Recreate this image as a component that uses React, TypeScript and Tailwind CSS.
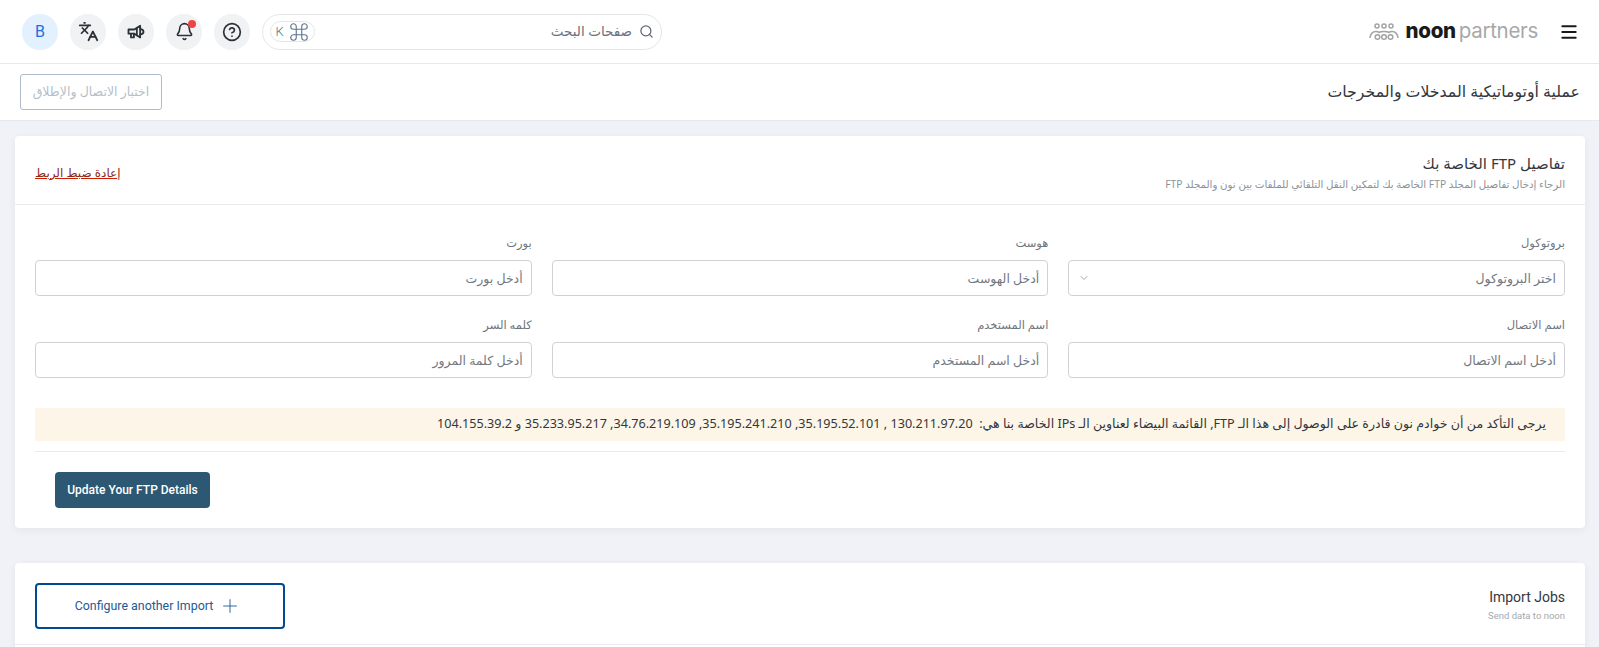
import { Bell, ChevronDown, CircleHelp, Command, Languages, Menu, Plus, Search } from "lucide-react";

const ARABIC_FONT = "font-['Noto_Sans','DejaVu_Sans',sans-serif]";

const fields = [
  { label: "بروتوكول", placeholder: "اختر البروتوكول", select: true },
  { label: "هوست", placeholder: "أدخل الهوست" },
  { label: "بورت", placeholder: "أدخل بورت" },
  { label: "اسم الاتصال", placeholder: "أدخل اسم الاتصال" },
  { label: "اسم المستخدم", placeholder: "أدخل اسم المستخدم" },
  { label: "كلمه السر", placeholder: "أدخل كلمة المرور" },
];

const Logo = () => (
  <div dir="ltr" className="flex items-center gap-[7px]">
    <svg width="30" height="20" viewBox="0 0 30 20" fill="none" stroke="#a3a3a3" strokeWidth="1.5">
      <circle cx="8" cy="4" r="2" />
      <circle cx="15" cy="4" r="2" />
      <circle cx="22" cy="4" r="2" />
      <circle cx="8.500" cy="15" r="2.300" />
      <circle cx="15" cy="15" r="2.300" />
      <circle cx="21.500" cy="15" r="2.300" />
      <path d="M1 16c.5-4 3-6.500 6-6.500 1.500 0 2.500.4 3 1 1-1 2.500-1 5-1s4 0 5 1c.5-.6 1.500-1 3-1 3 0 5.500 2.500 6 6.500" />
    </svg>
    <div className="flex items-baseline font-['Inter',sans-serif] text-[20.5px] leading-none tracking-[-0.3px]">
      <span className="font-extrabold text-[#1a1a1a]">noon</span>
      <span className="ml-[3px] font-normal text-[#a8a8a8]">partners</span>
    </div>
  </div>
);

const MegaphoneIcon = () => (
  <svg width="20" height="20" viewBox="0 0 24 24" fill="none" stroke="currentColor" strokeWidth="2.2" strokeLinejoin="round" strokeLinecap="round">
    <path d="M3 9h7l7-4.500v14L10 14H3z" />
    <path d="M6 14v4.500h3.500V14" />
    <path d="M17 8.500c2.500.2 4 1.600 4 3.200s-1.500 3-4 3.200" />
    <path d="M13 7v9" />
  </svg>
);

const IconButton = ({ children, dot }: { children: React.ReactNode; dot?: boolean }) => (
  <button className="relative flex h-9 w-9 items-center justify-center rounded-full bg-[#f1f2f4] text-[#2c3138]">
    {children}
    {dot && <span className="absolute right-[6px] top-[6px] h-2 w-2 rounded-full bg-[#ef4444]" />}
  </button>
);

const Header = () => (
  <header className="flex h-16 shrink-0 items-center justify-between border-b border-[#e6e8ec] bg-white pl-[22px] pr-[20px]">
    <div className="flex items-center gap-[21px]">
      <Menu size={20} strokeWidth={2.4} className="text-[#1a1a1a]" />
      <Logo />
    </div>
    <div dir="ltr" className="flex items-center gap-3">
      <div className="flex h-9 w-9 items-center justify-center rounded-full bg-[#e3f0fd] font-['Roboto',sans-serif] text-base text-[#1f6fe0]">
        B
      </div>
      <IconButton>
        <Languages size={21} strokeWidth={2} />
      </IconButton>
      <IconButton>
        <MegaphoneIcon />
      </IconButton>
      <IconButton dot>
        <Bell size={19} strokeWidth={2} />
      </IconButton>
      <IconButton>
        <CircleHelp size={20} strokeWidth={2} />
      </IconButton>
      <div className="flex h-9 w-[400px] items-center justify-between rounded-full border border-[#e4e6ea] bg-white pl-[7px] pr-[7px]">
        <div className="flex h-[21px] w-[45px] items-center justify-center gap-[4px] rounded-full border border-[#e4e6ea] font-['Roboto',sans-serif] text-[13px] font-light text-[#5f7390]">
          K
          <Command size={22} strokeWidth={1.2} />
        </div>
        <div dir="rtl" className="flex items-center gap-[7px]">
          <Search size={15} className="text-[#5f6670]" />
          <span className={`${ARABIC_FONT} text-[13.5px] text-[#6b7280]`}>صفحات البحث</span>
        </div>
      </div>
    </div>
  </header>
);

const SubHeader = () => (
  <div className="flex h-[57px] shrink-0 items-center justify-between border-b border-[#e6e8ec] bg-white pl-5 pr-[19px]">
    <h1 className={`${ARABIC_FONT} text-[15.75px] font-normal text-[#33373d]`}>عملية أوتوماتيكية المدخلات والمخرجات</h1>
    <button className={`${ARABIC_FONT} h-9 w-[142px] rounded-[3px] border border-[#aebbc8] text-[12.5px] text-[#b4bfca]`}>
      اختبار الاتصال والإطلاق
    </button>
  </div>
);

const FtpCard = () => (
  <section className="rounded-[4px] bg-white shadow-[0_2px_8px_rgba(30,40,70,0.06)]">
    <div className="flex h-[69px] items-center justify-between border-b border-[#e9ebee] px-5">
      <div className="mt-[2px]">
        <h2 className={`${ARABIC_FONT} text-[15px] leading-5 font-normal text-[#33373d]`}>تفاصيل FTP الخاصة بك</h2>
        <p className={`${ARABIC_FONT} mt-[5px] text-[10.25px] leading-3 text-[#8c929a]`}>
          الرجاء إدخال تفاصيل المجلد FTP الخاصة بك لتمكين النقل التلقائي للملفات بين نون والمجلد FTP
        </p>
      </div>
      <a className={`${ARABIC_FONT} mt-[5px] text-[12px] text-[#8f2a12] underline decoration-[#d01c00]`}>
        إعادة ضبط الربط
      </a>
    </div>
    <div className="px-5 pt-[29px]">
      <div className="grid grid-cols-3 gap-x-5 gap-y-[20px]">
        {fields.map((field) => (
          <label key={field.label} className="block">
            <span className={`${ARABIC_FONT} block h-[26px] text-[11.5px] leading-[18px] text-[#6f757d]`}>{field.label}</span>
            <div className="relative">
              <input
                readOnly
                placeholder={field.placeholder}
                className={`${ARABIC_FONT} h-9 w-full rounded-[4px] border border-[#cfd1d4] bg-white px-2 text-[12.5px] outline-none placeholder:text-[#73787f]`}
              />
              {field.select && (
                <ChevronDown size={12} className="absolute left-[10px] top-[12px] text-[#a8acb2]" />
              )}
            </div>
          </label>
        ))}
      </div>
      <div
        className={`${ARABIC_FONT} mt-[30px] flex h-[33px] items-center bg-[#fdf6e8] pr-[19px] text-[12.6px] text-[#33373d]`}
      >
        يرجى التأكد من أن خوادم نون قادرة على الوصول إلى هذا الـ FTP, القائمة البيضاء لعناوين الـ IPs الخاصة بنا هي:&nbsp;
        130.211.97.20 , 35.195.52.101, 35.195.241.210, 34.76.219.109, 35.233.95.217 و 104.155.39.2
      </div>
      <div className="mt-[10px] flex justify-end border-t border-[#e9ebee] pb-5 pl-5 pt-5">
        <button className="h-9 w-[155px] rounded-[4px] bg-[#2c5874] font-['Roboto',sans-serif] text-[12px] font-medium text-white">
          Update Your FTP Details
        </button>
      </div>
    </div>
  </section>
);

const ImportCard = () => (
  <section className="mt-[35px] h-40 rounded-[4px] bg-white shadow-[0_2px_8px_rgba(30,40,70,0.06)]">
    <div className="flex items-center justify-between border-b border-[#e9ebee] px-5 pb-[15px] pt-5">
      <div className="mb-[3px] font-['Roboto',sans-serif]">
        <h2 className="text-[14px] font-normal leading-5 text-[#33373d]">Import Jobs</h2>
        <p className="mt-[3px] text-[9.5px] leading-3 text-[#a5a9ae]">Send data to noon</p>
      </div>
      <button
        dir="ltr"
        className="flex h-[46px] w-[250px] items-center justify-center gap-[6px] rounded-[4px] border-2 border-[#004a8f] pr-[4px] font-['Roboto',sans-serif] text-[12.4px] text-[#1f5a94]"
      >
        Configure another Import
        <Plus size={22} strokeWidth={1} />
      </button>
    </div>
  </section>
);

const App = () => {
  return (
    <div dir="rtl" className="flex h-screen flex-col overflow-hidden bg-[#f0f2f7]">
      <Header />
      <SubHeader />
      <main className="shrink-0 pl-[15px] pr-[14px] pt-[15px]">
        <FtpCard />
        <ImportCard />
      </main>
    </div>
  );
};

export default App;
